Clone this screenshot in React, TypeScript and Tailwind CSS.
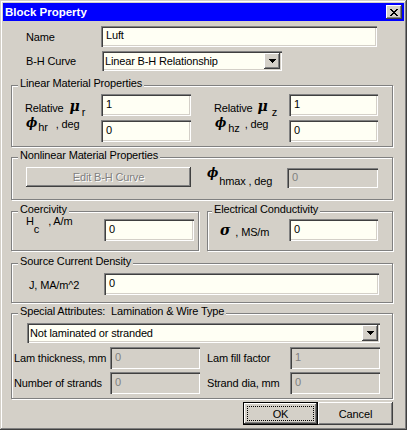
import type { ReactNode } from "react";

const SUNKEN =
  "shadow-[inset_1px_1px_0_#808080,inset_2px_2px_0_#404040,inset_-1px_-1px_0_#ffffff,inset_-2px_-2px_0_#d4d0c8]";
const RAISED =
  "shadow-[inset_-1px_-1px_0_#404040,inset_1px_1px_0_#ffffff,inset_-2px_-2px_0_#808080,inset_2px_2px_0_#d4d0c8]";
const MATH = "font-['DejaVu_Serif',serif] font-bold italic tracking-normal";

function Group({
  title,
  className,
  titleClass = "left-[6px]",
  children,
}: {
  title: string;
  className: string;
  titleClass?: string;
  children: ReactNode;
}) {
  return (
    <div
      className={`relative border border-[#808080] shadow-[1px_1px_0_#ffffff,inset_1px_1px_0_#ffffff] ${className}`}
    >
      <span
        className={`absolute top-[-9px] bg-[#d4d0c8] px-[2px] leading-[12px] whitespace-pre ${titleClass}`}
      >
        {title}
      </span>
      {children}
    </div>
  );
}

function Field({
  value,
  className,
  disabled = false,
}: {
  value: string;
  className: string;
  disabled?: boolean;
}) {
  return (
    <div
      className={`${SUNKEN} ${
        disabled ? "bg-[#d4d0c8] text-[#808080]" : "bg-[#fffff4]"
      } flex items-center pl-[5px] pb-[3px] leading-[14px] ${className}`}
    >
      {value}
    </div>
  );
}

function DropArrow() {
  return (
    <div
      className={`${RAISED} bg-[#d4d0c8] w-[16px] h-[16px] flex items-center justify-center`}
    >
      <svg width="7" height="4" viewBox="0 0 7 4" shapeRendering="crispEdges">
        <path d="M0 0h7v1H0z M1 1h5v1H1z M2 2h3v1H2z M3 3h1v1H3z" fill="#000" />
      </svg>
    </div>
  );
}

function Combo({ value, className }: { value: string; className: string }) {
  return (
    <div
      className={`${SUNKEN} bg-[#fffff4] h-[20px] flex items-center pl-[3px] pr-[2px] ${className}`}
    >
      <span className="flex-1 whitespace-nowrap leading-[14px]">{value}</span>
      <DropArrow />
    </div>
  );
}

export default function App() {
  return (
    <div className="w-[407px] h-[430px] bg-[#d4d0c8] p-[3px] flex flex-col text-[11px] tracking-[-0.15px] text-black font-['Liberation_Sans',Arial,sans-serif] shadow-[inset_-1px_-1px_0_#404040,inset_1px_1px_0_#d4d0c8,inset_-2px_-2px_0_#808080,inset_2px_2px_0_#ffffff]">
      {/* title bar */}
      <div className="h-[18px] bg-[#0000ff] flex items-center justify-between px-[2px]">
        <span className="text-white font-bold text-[11.5px] tracking-normal leading-[14px]">
          Block Property
        </span>
        <div
          className={`${RAISED} bg-[#d4d0c8] w-[16px] h-[14px] flex items-center justify-center`}
        >
          <svg width="8" height="7" viewBox="0 0 8 7" shapeRendering="crispEdges">
            <path
              d="M0 0h2v1H0z M6 0h2v1H6z M1 1h2v1H1z M5 1h2v1H5z M2 2h4v1H2z M3 3h2v1H3z M2 4h4v1H2z M1 5h2v1H1z M5 5h2v1H5z M0 6h2v1H0z M6 6h2v1H6z"
              fill="#000"
            />
          </svg>
        </div>
      </div>

      <div className="flex-1 flex flex-col">
        <div className="mt-[5px] flex items-center pl-[23px]">
          <span className="w-[75px] leading-[14px]">Name</span>
          <Field value="Luft" className="w-[276px] h-[21px]" />
        </div>
        <div className="mt-[4px] flex items-center pl-[23px]">
          <span className="w-[76px] leading-[14px]">B-H Curve</span>
          <Combo value="Linear B-H Relationship" className="w-[180px]" />
        </div>

        <Group
          title="Linear Material Properties"
          className="mt-[14px] ml-[8px] w-[382px] h-[62px]"
        >
          <div className="flex pl-[13px]">
            <div className="w-[76px] pt-[12px]">
              <div className="h-[18px] flex items-start">
                <span className="pt-[3px] leading-[14px]">Relative</span>
                <span className={`${MATH} text-[14px] leading-[14px] pt-[1px] ml-[6px]`}>μ</span>
                <span className="pt-[7px] leading-[14px] ml-[2px]">r</span>
              </div>
              <div className="h-[15px] flex items-start">
                <span className={`${MATH} text-[12px] leading-[12px] pt-[1px] ml-[1px]`}>ϕ</span>
                <span className="pt-[4px] leading-[14px] ml-[1px]">hr</span>
                <span className="pt-[1px] leading-[14px] ml-[8px]">, deg</span>
              </div>
            </div>
            <div className="w-[90px] pt-[8px] flex flex-col gap-[4px]">
              <Field value="1" className="h-[22px]" />
              <Field value="0" className="h-[22px]" />
            </div>
            <div className="ml-[23px] w-[75px] pt-[12px]">
              <div className="h-[18px] flex items-start">
                <span className="pt-[3px] leading-[14px]">Relative</span>
                <span className={`${MATH} text-[14px] leading-[14px] pt-[1px] ml-[5px]`}>μ</span>
                <span className="pt-[7px] leading-[14px] ml-[4px]">z</span>
              </div>
              <div className="h-[15px] flex items-start">
                <span className={`${MATH} text-[12px] leading-[12px] pt-[1px] ml-[1px]`}>ϕ</span>
                <span className="pt-[5px] leading-[14px] ml-[2px]">hz</span>
                <span className="pt-[1px] leading-[14px] ml-[5px]">, deg</span>
              </div>
            </div>
            <div className="w-[89px] pt-[8px] flex flex-col gap-[4px]">
              <Field value="1" className="h-[22px]" />
              <Field value="0" className="h-[22px]" />
            </div>
          </div>
        </Group>

        <Group
          title="Nonlinear Material Properties"
          className="mt-[10px] ml-[8px] w-[382px] h-[43px]"
        >
          <div className="flex items-start pl-[14px] pt-[9px]">
            <div
              className={`${RAISED} bg-[#d4d0c8] w-[165px] h-[20px] flex items-center justify-center leading-[14px] text-[#808080] [text-shadow:1px_1px_0_#ffffff]`}
            >
              Edit B-H Curve
            </div>
            <div className="ml-[15px] w-[81px] flex items-start">
              <span className={`${MATH} text-[12px] leading-[12px] ml-[1px]`}>ϕ</span>
              <span className="pt-[7px] leading-[14px] ml-[1px] whitespace-pre">hmax , deg</span>
            </div>
            <Field disabled value="0" className="w-[91px] h-[20px] mt-[1px]" />
          </div>
        </Group>

        <div className="mt-[11px] ml-[8px] flex">
          <Group title="Coercivity" className="w-[188px] h-[40px]">
            <div className="flex items-start pl-[14px]">
              <div className="w-[78px] pt-[5px] flex items-start">
                <span className="leading-[9px]">H</span>
                <span className="pt-[8px] leading-[9px]">c</span>
                <span className="leading-[9px] ml-[9px]">, A/m</span>
              </div>
              <Field value="0" className="w-[90px] h-[22px] mt-[7px]" />
            </div>
          </Group>
          <Group
            title="Electrical Conductivity"
            titleClass="left-[4px]"
            className="ml-[8px] w-[186px] h-[40px]"
          >
            <div className="flex items-start pl-[12px]">
              <div className="w-[69px] flex items-start">
                <span className={`${MATH} text-[14px] leading-[14px] pt-[11px]`}>σ</span>
                <span className="pt-[13px] leading-[14px] ml-[5px]">, MS/m</span>
              </div>
              <Field value="0" className="w-[89px] h-[22px] mt-[7px]" />
            </div>
          </Group>
        </div>

        <Group
          title="Source Current Density"
          className="mt-[12px] ml-[8px] w-[382px] h-[40px]"
        >
          <div className="flex items-start pl-[17px] pt-[9px]">
            <span className="w-[75px] pt-[5px] leading-[14px]">J, MA/m^2</span>
            <Field value="0" className="w-[275px] h-[22px]" />
          </div>
        </Group>

        <Group
          title="Special Attributes:  Lamination & Wire Type"
          className="mt-[10px] ml-[8px] w-[382px] h-[86px]"
        >
          <div className="flex flex-col pt-[9px]">
            <Combo value="Not laminated or stranded" className="ml-[15px] w-[353px]" />
            <div className="mt-[4px] flex items-center pl-[2px]">
              <span className="w-[96px] leading-[14px] whitespace-nowrap">Lam thickness, mm</span>
              <Field disabled value="0" className="w-[90px] h-[22px]" />
              <span className="ml-[7px] w-[83px] leading-[14px]">Lam fill factor</span>
              <Field disabled value="1" className="w-[90px] h-[22px]" />
            </div>
            <div className="mt-[3px] flex items-center pl-[2px]">
              <span className="w-[96px] leading-[14px] whitespace-nowrap">Number of strands</span>
              <Field disabled value="0" className="w-[90px] h-[22px]" />
              <span className="ml-[7px] w-[83px] leading-[14px]">Strand dia, mm</span>
              <Field disabled value="0" className="w-[90px] h-[22px]" />
            </div>
          </div>
        </Group>

        <div className="mt-[3px] flex pl-[240px]">
          <div className="w-[75px] h-[23px] border border-black">
            <div className={`${RAISED} bg-[#d4d0c8] w-full h-full p-[3px]`}>
              <div className="w-full h-full border border-dotted border-black flex items-center justify-center leading-[14px]">
                OK
              </div>
            </div>
          </div>
          <div
            className={`${RAISED} bg-[#d4d0c8] w-[75px] h-[23px] flex items-center justify-center leading-[14px]`}
          >
            Cancel
          </div>
        </div>
      </div>
    </div>
  );
}
